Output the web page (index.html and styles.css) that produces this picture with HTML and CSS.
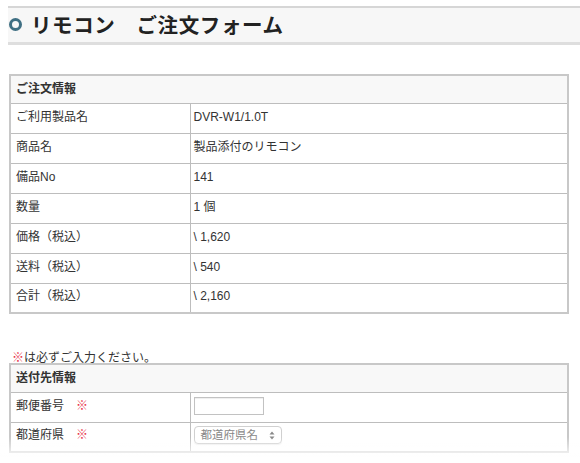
FILE: index.html
```html
<!doctype html>
<html lang="ja">

<head>
    <meta charset="utf-8">
    <meta name="viewport" content="width=device-width, initial-scale=1">
    <title>リモコン ご注文フォーム</title>
    <link rel="stylesheet" href="styles.css">
</head>

<body>
    <div class="page">
        <h1 class="title"><span class="ring"></span>リモコン　ご注文フォーム</h1>

        <table class="form-table order">
            <tr><th colspan="2">ご注文情報</th></tr>
            <tr><td class="label">ご利用製品名</td><td>DVR-W1/1.0T</td></tr>
            <tr><td class="label">商品名</td><td>製品添付のリモコン</td></tr>
            <tr><td class="label">備品No</td><td>141</td></tr>
            <tr><td class="label">数量</td><td>1 個</td></tr>
            <tr><td class="label">価格（税込）</td><td>\ 1,620</td></tr>
            <tr><td class="label">送料（税込）</td><td>\ 540</td></tr>
            <tr><td class="label">合計（税込）</td><td>\ 2,160</td></tr>
        </table>

        <p class="note"><span class="req">※</span>は必ずご入力ください。</p>

        <table class="form-table">
            <tr><th colspan="2">送付先情報</th></tr>
            <tr>
                <td class="label">郵便番号<span class="req mark">※</span></td>
                <td><input type="text" class="zip"></td>
            </tr>
            <tr>
                <td class="label">都道府県<span class="req mark">※</span></td>
                <td>
                    <span class="select">都道府県名
                        <svg width="6" height="9" viewBox="0 0 6 9"><path d="M3 0.5L5.5 3.5H0.5Z M3 8.5L5.5 5.5H0.5Z" fill="#888"/></svg>
                    </span>
                </td>
            </tr>
        </table>
    </div>
    <div class="fade"></div>
</body>

</html>
```

FILE: styles.css
```css
body {
    margin: 0;
    background: #fff;
    color: #333;
    font-family: "Liberation Sans", "Noto Sans CJK JP", sans-serif;
    font-size: 12px;
}

.page {
    padding: 6px 0 0 8px;
}

.title {
    margin: 0;
    display: flex;
    align-items: center;
    gap: 9px;
    padding: 0 0 2px 1px;
    box-sizing: border-box;
    height: 39px;
    background: #f7f7f7;
    border-top: 2px solid #d6d6d6;
    border-bottom: 3px solid #dedede;
    font-family: "Noto Sans CJK JP", sans-serif;
    font-size: 20.5px;
    font-weight: bold;
    color: #222;
    letter-spacing: 0.6px;
}

.ring {
    width: 7px;
    height: 7px;
    border: 3.5px solid #3f6f83;
    border-radius: 50%;
    flex: none;
}

.form-table {
    width: 560px;
    margin-left: 1px;
    border-collapse: collapse;
    border: 2px solid #c8c8c8;
}

.order {
    margin-top: 29px;
}

.form-table th {
    height: 28px;
    box-sizing: border-box;
    line-height: 16px;
    padding: 0 5px 1px;
    background: #f8f8f8;
    text-align: left;
    font-weight: bold;
    border: 1px solid #bdbdbd;
}

.form-table td {
    height: 30px;
    box-sizing: border-box;
    line-height: 16px;
    padding: 0 4px 3px 3px;
    border: 1px solid #bdbdbd;
}

.form-table td.label {
    width: 180px;
    padding-left: 5px;
}

.note {
    margin: 37px 0 -3px 4px;
    line-height: 15px;
}

.req {
    color: #e8344a;
}

.mark {
    margin-left: 12px;
}

.zip {
    display: block;
    width: 66px;
    height: 14px;
    margin: 0;
    padding: 1px;
    border: 1px solid #c2c2c2;
    box-shadow: inset 0 1px 1px #eee;
}

.select {
    display: inline-flex;
    align-items: center;
    gap: 11px;
    height: 16px;
    padding: 0 6px;
    border: 1px solid #d0d0d0;
    border-radius: 4px;
    color: #888;
    font-size: 11.5px;
    box-shadow: 0 1px 1px #eee;
}

.fade {
    position: fixed;
    left: 0;
    right: 0;
    bottom: 0;
    height: 26px;
    background: linear-gradient(rgba(255, 255, 255, 0), #fff 90%);
}
```
